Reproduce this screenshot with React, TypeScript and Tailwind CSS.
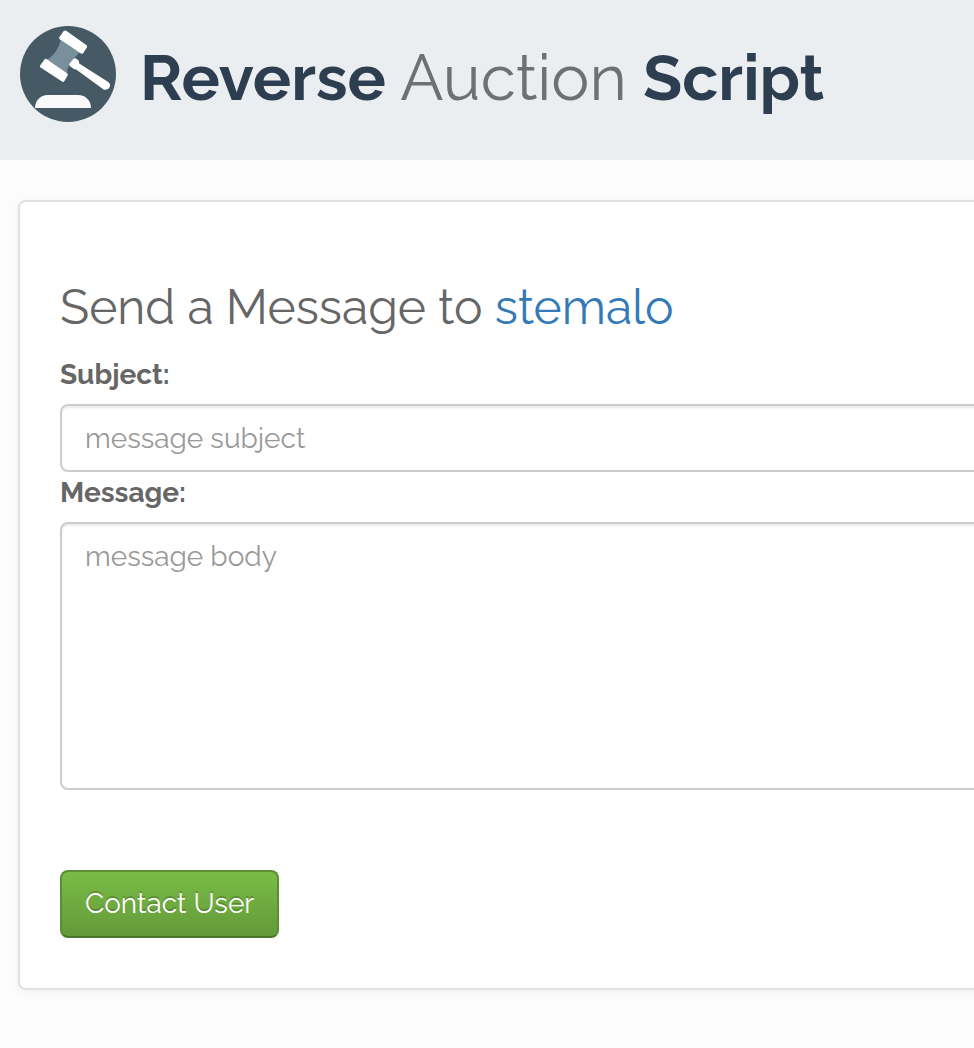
import { useState } from "react";

function GavelLogo() {
  return (
    <svg viewBox="0 0 96 96" className="h-24 w-24 shrink-0" aria-hidden="true">
      <circle cx="48" cy="48" r="48" fill="#455a64" />
      <path
        d="M41 13 Q38.5 26 27 34 L47 48 Q46.5 38 58 28 L61 26 Z"
        fill="#78909c"
      />
      <g fill="#ffffff">
        <path d="M43.8 5 Q45 4 46.2 4.8 L66.2 19 Q67.6 20 66.8 21.4 L63.3 27 Q62.3 28.2 61 27.4 L39.8 13.2 Q38.7 12.3 39.4 11 Z" />
        <path d="M24.5 33.4 Q25.5 32.4 26.8 33.2 L47 47.2 Q48.2 48.2 47.6 49.6 L44.4 55 Q43.4 56.4 42 55.6 L20.6 41.4 Q19.4 40.6 20.3 39.2 Z" />
        <path d="M52.8 33.4 Q54.2 31.6 56 32.6 L58.2 34.2 Q59.4 35.2 59.2 37.6 L88.2 56 Q91 58.2 89.6 61.2 Q87.4 65 83.6 63.4 L56.2 43.4 Q54.6 43.6 53.2 42.4 L50 40.2 Q48.6 39 49.4 37.8 Z" />
      </g>
      <path
        d="M15 82 C15 75 20 69 28 69 H58 C66 69 71 75 71 82 Z"
        fill="#fafafa"
      />
    </svg>
  );
}

const field =
  "block w-full rounded-lg border-2 border-[#cccccc] bg-white px-[23px] text-[28px] leading-[42px] text-[#555555] shadow-[inset_0_2px_2px_rgba(0,0,0,0.075)] outline-none placeholder:text-[#999999] placeholder:opacity-100";

export default function App() {
  const [subject, setSubject] = useState("");
  const [message, setMessage] = useState("");

  return (
    <div className="min-h-screen overflow-hidden bg-[#fcfcfc] font-['Raleway','Inter',sans-serif] text-[#666666]">
      <header className="flex h-40 items-start gap-6 bg-[#ebeef1] px-5 pt-[26px]">
        <GavelLogo />
        <h1 className="pt-2 text-[64px] leading-[88px] font-normal whitespace-nowrap text-[#707070]">
          <span className="font-bold text-[#2c3e50]">Reverse</span> Auction{" "}
          <span className="font-bold text-[#2c3e50]">Script</span>
        </h1>
      </header>

      <main className="pt-10 pl-[18px]">
        {/* the panel and its fields run off the right edge of the window */}
        <form
          className="-mr-4 rounded-lg border-2 border-[#e1e1e1] bg-white pt-[78px] pb-[50px] pl-10 shadow-[0_2px_10px_rgba(0,0,0,0.05)]"
          onSubmit={(e) => e.preventDefault()}
        >
          <h2 className="text-[48px] leading-[54px] whitespace-nowrap">
            Send a Message to{" "}
            <a href="#stemalo" className="text-[#337ab7]">
              stemalo
            </a>
          </h2>
          <label
            htmlFor="subject"
            className="mt-5 mb-2 block text-[28px] leading-[42px] font-bold"
          >
            Subject:
          </label>
          <input
            id="subject"
            type="text"
            placeholder="message subject"
            value={subject}
            onChange={(e) => setSubject(e.target.value)}
            className={`${field} h-[68px]`}
          />
          <label
            htmlFor="message"
            className="mb-2 block text-[28px] leading-[42px] font-bold"
          >
            Message:
          </label>
          <textarea
            id="message"
            placeholder="message body"
            value={message}
            onChange={(e) => setMessage(e.target.value)}
            className={`${field} h-[268px] resize-none py-3`}
          />
          <button
            type="submit"
            className="mt-20 block h-[68px] cursor-pointer rounded-lg border-2 border-[#5a8f35] border-b-[#4a762c] bg-linear-to-b from-[#7abc46] to-[#639a3a] px-[23px] text-[28px] leading-[42px] text-white text-shadow-[0_-2px_0_rgba(0,0,0,0.2)]"
          >
            Contact User
          </button>
        </form>
      </main>
    </div>
  );
}
